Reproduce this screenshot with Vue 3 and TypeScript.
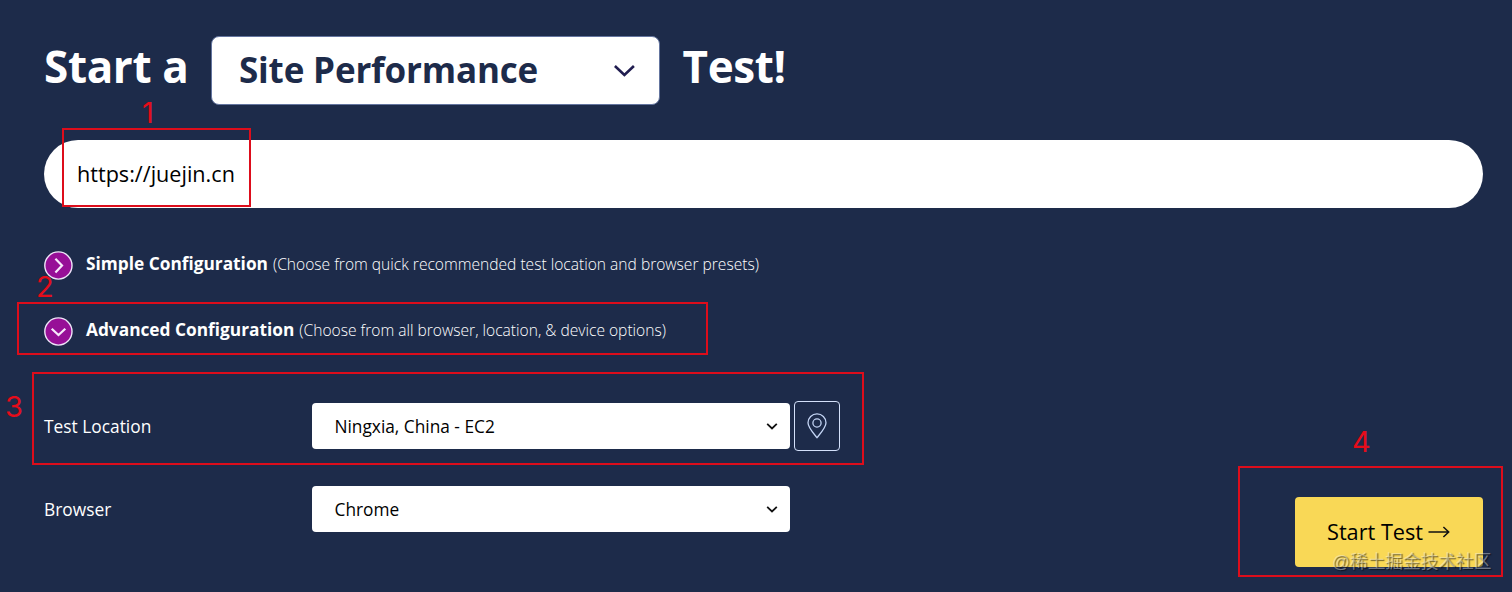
<script setup lang="ts">
interface ConfigRow { title: string; note: string; open: boolean }
interface Field { label: string; value: string; pin: boolean }

const configs: ConfigRow[] = [
  { title: 'Simple Configuration', note: '(Choose from quick recommended test location and browser presets)', open: false },
  { title: 'Advanced Configuration', note: '(Choose from all browser, location, & device options)', open: true },
]
const fields: Field[] = [
  { label: 'Test Location', value: 'Ningxia, China - EC2', pin: true },
  { label: 'Browser', value: 'Chrome', pin: false },
]
</script>

<template>
  <main class="page">
    <h1 class="heading">
      <span class="word start">Start a</span>
      <span class="kind">
        <span class="kind-text">Site Performance</span>
        <svg class="kind-arrow" viewBox="0 0 22 14"><path d="M1.9 2 L11.4 11 L20.9 2" /></svg>
      </span>
      <span class="word test">Test!</span>
    </h1>

    <div class="url"><span class="url-text">https://juejin.cn</span></div>

    <section class="configs">
      <div v-for="c in configs" :key="c.title" class="config">
        <svg class="toggle" viewBox="0 0 30 30">
          <circle cx="15.4" cy="15.5" r="13.6" />
          <path v-if="c.open" d="M8.7 12.7 L15.5 19.1 L22.3 12.7" />
          <path v-else d="M12.4 8.8 L19 15.6 L12.4 22.4" />
        </svg>
        <strong class="config-title">{{ c.title }}</strong>
        <span class="config-note">{{ c.note }}</span>
      </div>
    </section>

    <section class="bottom">
      <div class="fields">
        <div v-for="f in fields" :key="f.label" class="field">
          <span class="label">{{ f.label }}</span>
          <span class="select">
            <span class="select-text">{{ f.value }}</span>
            <svg class="select-arrow" viewBox="0 0 12 8"><path d="M1.2 1.9 L6 6.5 L10.8 1.9" /></svg>
          </span>
          <span v-if="f.pin" class="pin">
            <svg viewBox="0 0 20 26">
              <path d="M10 24.7 C7.6 21.6 1 14.7 1 9.8 A9 9 0 0 1 19 9.8 C19 14.7 12.4 21.6 10 24.7 Z" />
              <circle cx="10" cy="10" r="4.1" />
            </svg>
          </span>
        </div>
      </div>
      <div class="start-button">
        <span class="start-text">Start Test</span>
        <svg class="start-arrow" viewBox="0 0 22 12"><path d="M0.5 6 H20.5 M15.4 1 L20.7 6 L15.4 11" /></svg>
      </div>
    </section>

    <div class="mark box-1"></div>
    <div class="mark box-2"></div>
    <div class="mark box-3"></div>
    <div class="mark box-4"></div>
    <span class="num num-1">1</span>
    <span class="num num-2">2</span>
    <span class="num num-3">3</span>
    <span class="num num-4">4</span>
    <span class="watermark">@稀土掘金技术社区</span>
  </main>
</template>

<style>
body { margin: 0; background: #1d2b4a; }
</style>

<style scoped>
.page {
  position: relative;
  box-sizing: border-box;
  width: 1512px;
  height: 592px;
  padding: 36px 29px 0 44px;
  overflow: hidden;
  background: #1d2b4a;
  color: #fff;
  font-family: "Open Sans", "Noto Sans", sans-serif;
  white-space: nowrap;
}
svg { display: block; fill: none; flex: none; }
.heading { display: flex; margin: 0; height: 69px; font-weight: 700; }
.word { font-size: 44px; letter-spacing: -0.35px; line-height: 60px; }
.start { width: 167px; }
.kind {
  box-sizing: border-box;
  display: flex;
  align-items: center;
  width: 449px;
  height: 69px;
  padding: 0 24px 0 27px;
  border: 1px solid #64759f;
  border-radius: 8px;
  background: #fff;
  color: #1d2b4a;
}
.kind-text { font-size: 35px; letter-spacing: -0.17px; line-height: 65px; margin-bottom: 2px; }
.kind-arrow { width: 22px; height: 14px; margin-left: auto; stroke: #211d50; stroke-width: 2.6; }
.test { margin-left: 22.5px; }
.url {
  display: flex;
  align-items: center;
  height: 68px;
  margin-top: 35px;
  padding-left: 33px;
  border-radius: 34px;
  background: #fff;
  color: #000;
}
.url-text { font-size: 21.6px; line-height: 66px; margin-bottom: 1px; }
.configs { display: flex; flex-direction: column; gap: 36px; margin-top: 42px; }
.config { display: flex; align-items: center; height: 30px; }
.toggle { width: 30px; height: 30px; margin-left: -1px; }
.toggle circle { fill: #970f97; stroke: #eee4f8; stroke-width: 1.4; }
.toggle path { stroke: #f6e8fa; stroke-width: 2.2; }
.config-title { margin: 0 0 3px 13px; font-size: 17.3px; line-height: 27px; }
.config-note { margin: 0 0 2px 5px; font-size: 15.58px; line-height: 22px; font-weight: 300; }
.bottom { display: flex; justify-content: space-between; align-items: flex-start; margin-top: 55px; }
.fields { display: flex; flex-direction: column; gap: 33px; }
.field { display: flex; align-items: center; height: 50px; }
.label { width: 267.5px; font-size: 17.35px; }
.select {
  box-sizing: border-box;
  display: flex;
  align-items: center;
  width: 478px;
  height: 46.5px;
  padding: 0 12px 0 23px;
  border-radius: 4px;
  background: #fff;
  color: #000;
}
.select-text { font-size: 17.3px; }
.select-arrow { width: 12px; height: 8px; margin-left: auto; stroke: #111; stroke-width: 1.8; }
.pin {
  box-sizing: border-box;
  display: flex;
  align-items: center;
  justify-content: center;
  width: 46px;
  height: 50px;
  margin-left: 4px;
  border: 1px solid #d3e0fa;
  border-radius: 4px;
}
.pin svg { width: 20px; height: 26px; stroke: #c4d5f5; stroke-width: 1.3; }
.start-button {
  box-sizing: border-box;
  display: flex;
  align-items: center;
  width: 188px;
  height: 70px;
  margin-top: 96px;
  padding-left: 32px;
  border-radius: 4px;
  background: #f9d856;
  color: #000;
}
.start-text { font-size: 21.7px; line-height: 30px; margin-bottom: 1px; }
.start-arrow { width: 22px; height: 12px; margin: 0 0 1px 5px; stroke: #111; stroke-width: 1.5; }

/* Red annotations laid over the form */
.mark { position: absolute; box-sizing: border-box; border: 2px solid #dd0d1b; }
.box-1 { left: 62px; top: 128px; width: 189px; height: 79px; }
.box-2 { left: 17px; top: 302px; width: 691px; height: 53px; }
.box-3 { left: 32px; top: 372px; width: 832px; height: 93px; }
.box-4 { left: 1238px; top: 466px; width: 265px; height: 111px; }
.num { position: absolute; color: #e60c1a; font-family: Inter, sans-serif; font-size: 29px; line-height: 30px; }
.num-1 { left: 142px; top: 98px; }
.num-2 { left: 36px; top: 272px; }
.num-3 { left: 5px; top: 392px; }
.num-4 { left: 1352px; top: 427px; }
.watermark {
  position: absolute;
  left: 1332px;
  top: 550px;
  color: rgba(255, 255, 255, 0.4);
  font-family: "Liberation Sans", "Noto Sans CJK SC", sans-serif;
  font-size: 17.7px;
  line-height: 24px;
  text-shadow: 1px 1px 1px rgba(0, 0, 0, 0.55);
}
</style>
